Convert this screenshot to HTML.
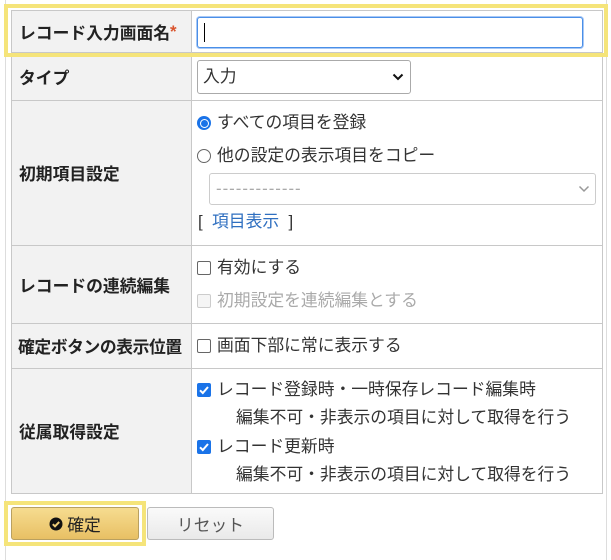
<!DOCTYPE html>
<html><head><meta charset="utf-8"><style>
body{margin:0;width:611px;height:548px;background:#fff;font-family:"Liberation Sans","Noto Sans CJK JP",sans-serif;font-size:16.8px;color:#333;position:relative;overflow:hidden}
.a{position:absolute}
.frame{left:5px;top:0;width:600px;height:560px;border-left:1px solid #ddd;border-right:1px solid #ddd}
.lbl{background:#f2f2f2;font-weight:bold;color:#222;display:flex;align-items:center;padding-left:7px;box-sizing:border-box;border:1px solid #c8c8c8;white-space:nowrap}
.val{background:#fff;border:1px solid #c8c8c8;box-sizing:border-box}
.t{white-space:nowrap;line-height:20px}
.cb{width:14px;height:14px;border:1px solid #666;border-radius:2px;background:#fff;box-sizing:border-box}
.rad{width:14px;height:14px;border-radius:50%;border:1px solid #666;box-sizing:border-box;background:#fff}
</style></head><body>
<div class="a frame"></div>
<div class="a lbl" style="left:11px;top:10px;width:181px;height:43px">レコード入力画面名<span style="color:#d9532c">*</span></div>
<div class="a val" style="left:191px;top:10px;width:412px;height:43px"></div>
<div class="a lbl" style="left:11px;top:52px;width:181px;height:49px">タイプ</div>
<div class="a val" style="left:191px;top:52px;width:412px;height:49px"></div>
<div class="a lbl" style="left:11px;top:100px;width:181px;height:146px">初期項目設定</div>
<div class="a val" style="left:191px;top:100px;width:412px;height:146px"></div>
<div class="a lbl" style="left:11px;top:245px;width:181px;height:79px">レコードの連続編集</div>
<div class="a val" style="left:191px;top:245px;width:412px;height:79px"></div>
<div class="a lbl" style="left:11px;top:323px;width:181px;height:46px;padding-left:6px;letter-spacing:-0.4px">確定ボタンの表示位置</div>
<div class="a val" style="left:191px;top:323px;width:412px;height:46px"></div>
<div class="a lbl" style="left:11px;top:368px;width:181px;height:126px">従属取得設定</div>
<div class="a val" style="left:191px;top:368px;width:412px;height:126px"></div>
<div class="a" style="left:4px;top:4px;width:596px;height:45px;border:4px solid #f5e47a"></div>
<div class="a" style="left:197px;top:17px;width:386px;height:31px;border:1px solid #4a8fe8;border-radius:3px;box-shadow:0 0 0 1px #a8c8f5;box-sizing:border-box;background:#fff"></div>
<div class="a" style="left:204px;top:23px;width:1px;height:19px;background:#000"></div>
<div class="a" style="left:197px;top:60px;width:214px;height:34px;border:1px solid #aaa;border-radius:3px;box-sizing:border-box;background:#fff"></div>
<div class="a t" style="left:203px;top:67px">入力</div>
<svg class="a" style="left:392px;top:73px" width="12" height="8"><path d="M1.5 1.5L6 6L10.5 1.5" stroke="#111" stroke-width="2" fill="none"/></svg>
<div class="a rad" style="left:197px;top:116px;border:none;background:#1a73e8"></div>
<div class="a" style="left:199.5px;top:118.5px;width:9px;height:9px;border-radius:50%;background:#fff"></div>
<div class="a" style="left:200.5px;top:119.5px;width:7px;height:7px;border-radius:50%;background:#1a73e8"></div>
<div class="a t" style="left:217px;top:113px">すべての項目を登録</div>
<div class="a rad" style="left:197px;top:149px"></div>
<div class="a t" style="left:217px;top:146px">他の設定の表示項目をコピー</div>
<div class="a" style="left:209px;top:173px;width:387px;height:32px;border:1px solid #ccc;border-radius:3px;box-sizing:border-box;background:#fff"></div>
<div class="a t" style="left:216px;top:179px;color:#aaa;letter-spacing:1px">-------------</div>
<svg class="a" style="left:578px;top:185px" width="12" height="8"><path d="M1.5 1.5L6 6L10.5 1.5" stroke="#999" stroke-width="1.5" fill="none"/></svg>
<div class="a t" style="left:198px;top:212px">[&nbsp; <span style="color:#2f6fc0">項目表示</span> &nbsp;]</div>
<div class="a cb" style="left:197px;top:261px"></div>
<div class="a t" style="left:217px;top:258px">有効にする</div>
<div class="a cb" style="left:197px;top:294px;border-color:#ccc;background:#f5f5f5"></div>
<div class="a t" style="left:217px;top:291px;color:#aaa">初期設定を連続編集とする</div>
<div class="a cb" style="left:197px;top:339px"></div>
<div class="a t" style="left:217px;top:336px">画面下部に常に表示する</div>
<svg class="a" style="left:197px;top:383px" width="14" height="14"><rect width="14" height="14" rx="2" fill="#1a73e8"/><path d="M3 7.3L5.8 10L11 4" stroke="#fff" stroke-width="2" fill="none"/></svg>
<div class="a t" style="left:217px;top:380px">レコード登録時・一時保存レコード編集時</div>
<div class="a t" style="left:236px;top:408px">編集不可・非表示の項目に対して取得を行う</div>
<svg class="a" style="left:197px;top:440px" width="14" height="14"><rect width="14" height="14" rx="2" fill="#1a73e8"/><path d="M3 7.3L5.8 10L11 4" stroke="#fff" stroke-width="2" fill="none"/></svg>
<div class="a t" style="left:217px;top:437px">レコード更新時</div>
<div class="a t" style="left:236px;top:465px">編集不可・非表示の項目に対して取得を行う</div>
<div class="a" style="left:4px;top:501px;width:134px;height:37px;border:4px solid #f5e47a"></div>
<div class="a" style="left:11px;top:507px;width:128px;height:33px;border:1px solid #b9a060;border-radius:3px;box-sizing:border-box;background:linear-gradient(#f6dc90,#e8c064);display:flex;align-items:center;justify-content:center;color:#222">
<svg width="14" height="14" style="margin-right:4px"><circle cx="7" cy="7" r="6.5" fill="#111"/><path d="M3.8 7.2L6 9.3L10.2 5" stroke="#f0cd78" stroke-width="2" fill="none"/></svg>確定</div>
<div class="a" style="left:147px;top:507px;width:127px;height:33px;border:1px solid #bbb;border-radius:3px;box-sizing:border-box;background:linear-gradient(#fafafa,#e9e9e9);display:flex;align-items:center;justify-content:center;color:#555">リセット</div>
</body></html>
